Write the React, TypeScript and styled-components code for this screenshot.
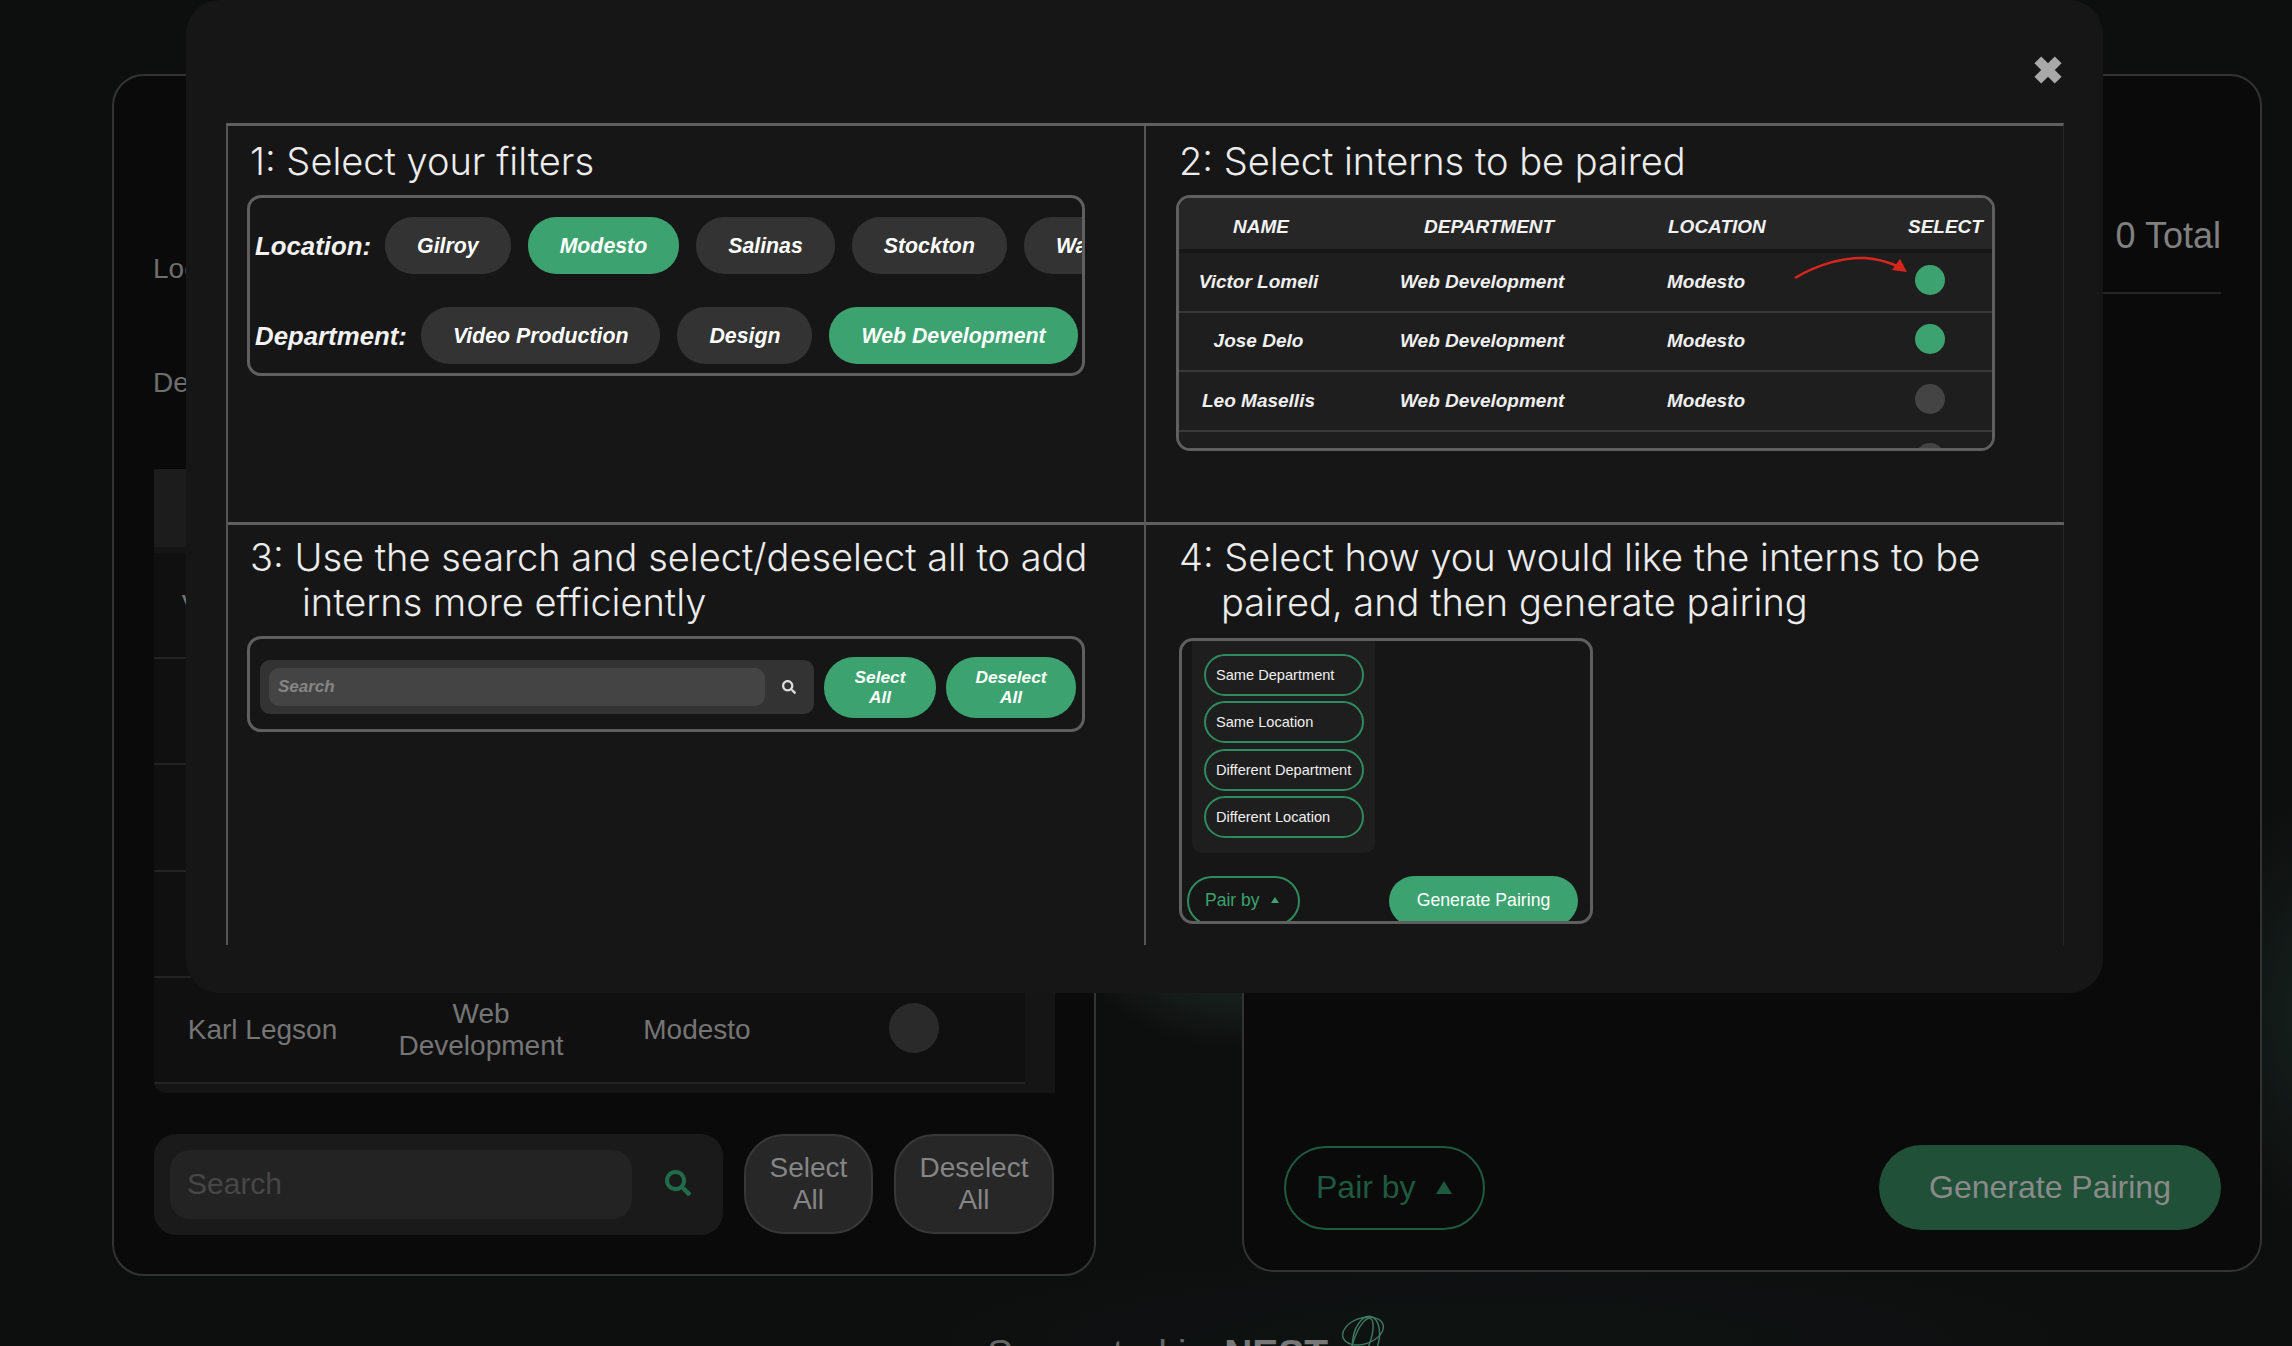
import * as React from 'react';
import styled, { createGlobalStyle } from 'styled-components';
import { FaSearch } from 'react-icons/fa';

const GREEN = '#3ca370';

const GlobalStyle = createGlobalStyle`
  html, body {
    margin: 0;
    padding: 0;
    background: #0c0d0d;
  }
  * {
    box-sizing: border-box;
  }
`;

const Page = styled.div`
  position: relative;
  width: 2292px;
  height: 1346px;
  overflow: hidden;
  padding: 74px 30px 0 112px;
  font-family: 'Liberation Sans', Arial, sans-serif;
  background:
    radial-gradient(ellipse 190px 150px at 1240px 900px, #1f2f2a 0%, #1a2622 50%, transparent 100%),
    radial-gradient(ellipse 120px 220px at 2320px 1010px, #16211e 0%, transparent 100%),
    radial-gradient(ellipse 800px 120px at 1500px 1340px, #0e1312 0%, transparent 100%),
    #0d0e0e;
`;

const Columns = styled.div`
  display: flex;
  align-items: flex-start;
  gap: 146px;
`;

const Card = styled.section<{ $width: number; $height: number }>`
  display: flex;
  flex-direction: column;
  width: ${props => props.$width}px;
  height: ${props => props.$height}px;
  border: 2px solid #333;
  border-radius: 32px;
  background: #0a0a0a;
`;

const LeftBody = styled.div`
  padding: 136px 40px 0;
`;

const FilterLine = styled.div`
  display: flex;
  align-items: center;
  height: 114px;
  margin-left: -1px;
  font-size: 28px;
  color: #6e6e6e;
`;

const BackTable = styled.div`
  width: 901px;
  height: 624px;
  margin-top: 29px;
  overflow: hidden;
  border-radius: 0 0 0 12px;
  background: #151515;
`;

const BackHead = styled.div`
  height: 78px;
  background: #1c1c1c;
  margin-bottom: 6px;
`;

const BackRow = styled.div`
  display: grid;
  grid-template-columns: 217px 220px 212px 222px;
  align-items: center;
  justify-items: center;
  width: 871px;
  height: 106.2px;
  border-bottom: 2px solid #232323;
  background: #101010;
  font-size: 28px;
  line-height: 32px;
  color: #757575;
  text-align: center;
`;

const BackDot = styled.span`
  width: 50px;
  height: 50px;
  margin-top: -4px;
  border-radius: 50%;
  background: #2a2a2a;
`;

const BackSearchRow = styled.div`
  display: flex;
  gap: 21px;
  margin-top: 41px;
`;

const BackSearch = styled.div`
  display: flex;
  align-items: center;
  width: 569px;
  height: 101px;
  padding: 0 16px;
  border-radius: 22px;
  background: #1a1a1a;
  color: #1f6b4a;
  font-size: 26px;

  svg {
    margin: -4px 0 0 -1px;
  }
`;

const BackInput = styled.input`
  width: 462px;
  height: 69px;
  margin-right: 34px;
  padding: 0 17px 2px;
  border: 0;
  outline: 0;
  border-radius: 20px;
  background: #232323;
  font-family: inherit;
  font-size: 30px;

  &::placeholder {
    color: #474747;
  }
`;

const BackButton = styled.button<{ $width: number }>`
  width: ${props => props.$width}px;
  height: 100px;
  padding: 0;
  border: 2px solid #383838;
  border-radius: 40px;
  background: #272727;
  font-family: inherit;
  font-size: 28px;
  line-height: 32px;
  color: #858585;
`;

const TotalBar = styled.div`
  display: flex;
  align-items: center;
  justify-content: flex-end;
  height: 218px;
  margin: 0 39px 0 40px;
  padding-top: 104px;
  border-bottom: 2px solid #262626;
  font-size: 36px;
  color: #808080;
`;

const PairBar = styled.div`
  display: flex;
  align-items: center;
  justify-content: space-between;
  margin-top: auto;
  padding: 0 39px 40px 40px;
`;

const BackPairBy = styled.div`
  display: flex;
  align-items: center;
  gap: 20px;
  width: 201px;
  height: 84px;
  padding-left: 30px;
  border: 2px solid #1f5a40;
  border-radius: 42px;
  font-size: 32px;
  color: #1f5a40;
`;

const Triangle = styled.span<{ $size: number; $color: string }>`
  width: 0;
  height: 0;
  border-left: ${props => props.$size}px solid transparent;
  border-right: ${props => props.$size}px solid transparent;
  border-bottom: ${props => props.$size * 1.7}px solid ${props => props.$color};
`;

const BackGenerate = styled.div`
  display: flex;
  align-items: center;
  justify-content: center;
  width: 342px;
  height: 85px;
  border-radius: 43px;
  background: #205138;
  font-size: 32px;
  color: #8a8a8a;
`;

const Footer = styled.footer`
  display: flex;
  align-items: flex-start;
  gap: 10px;
  padding: 56px 0 0 875px;
  font-size: 39px;
  color: #666;
`;

const FooterBrand = styled.b`
  margin-left: 6px;
  color: #777;
`;

const FooterLogo = styled.svg`
  width: 46px;
  height: 46px;
  margin: -17px 0 0 3px;
`;

const Modal = styled.div`
  position: absolute;
  top: 0;
  left: 186px;
  width: 1917px;
  height: 993px;
  padding: 0 39px 0 40px;
  border-radius: 34px;
  background: #161616;
`;

const ModalTop = styled.div`
  display: flex;
  justify-content: flex-end;
  height: 123px;
  padding: 55px 1px 0 0;
`;

const CloseIcon = styled.svg`
  width: 30px;
  height: 30px;
`;

const Steps = styled.div`
  display: grid;
  grid-template-columns: 916px 920px;
  grid-template-rows: 396px 423px;
  border-top: 3px solid #5f5f5f;
  border-left: 2px solid #555;
  border-right: 1px solid #262626;
`;

const Step = styled.div<{ $bottom?: boolean; $right?: boolean }>`
  padding: ${props => (props.$bottom ? '10px' : '13px')} 0 0 ${props => (props.$right ? '30px' : '19px')};
  border-top: ${props => (props.$bottom ? '3px solid #5f5f5f' : '0')};
  border-left: ${props => (props.$right ? '2px solid #555' : '0')};
`;

const StepTitle = styled.h2<{ $indent: number }>`
  margin: 0 0 11px 3px;
  padding-left: ${props => props.$indent}px;
  text-indent: -${props => props.$indent}px;
  font-family: Inter, 'Liberation Sans', sans-serif;
  font-size: 38px;
  font-weight: 300;
  line-height: 45px;
  color: #ececec;
`;

const Frame = styled.div<{ $width: number; $height: number }>`
  position: relative;
  width: ${props => props.$width}px;
  height: ${props => props.$height}px;
  overflow: hidden;
  border: 3px solid #5f5f5f;
  border-radius: 14px;
`;

const PairFrame = styled(Frame)`
  margin: 13px 0 0 3px;
`;

const ChipRow = styled.div`
  display: flex;
  align-items: center;
  gap: 17px;
  height: 57px;
  margin: 19px 0 33px;
  padding-left: 5px;
  white-space: nowrap;
`;

const RowLabel = styled.span`
  margin-right: -3px;
  padding-top: 1px;
  font-size: 25.8px;
  font-weight: 700;
  font-style: italic;
  color: #f2f2f2;
`;

const Chip = styled.span<{ $on?: boolean }>`
  display: flex;
  align-items: center;
  flex-shrink: 0;
  height: 57px;
  padding: 1px 32px 0;
  border-radius: 28px;
  background: ${props => (props.$on ? GREEN : '#333')};
  font-size: 21.3px;
  font-weight: 700;
  font-style: italic;
  color: #fff;
`;

const InternGridHead = styled.div`
  display: grid;
  grid-template-columns: 191px 244px 240px 1fr;
  align-items: center;
  height: 51px;
  margin-bottom: 4px;
  padding: 7px 0 0 54px;
  background: #262626;
  box-shadow: 0 4px 0 #171717;
  font-size: 19px;
  font-weight: 700;
  font-style: italic;
  color: #f2f2f2;
`;

const InternRow = styled.div`
  display: grid;
  grid-template-columns: 159px 329px 248px 30px;
  align-items: center;
  height: 59.5px;
  border-bottom: 2px solid #383838;
  background: #1e1e1e;
  font-size: 19px;
  font-weight: 700;
  font-style: italic;
  color: #efefef;
`;

const NameCell = styled.span`
  text-align: center;
`;

const DepartmentCell = styled.span`
  padding-left: 62px;
`;

const SelectDot = styled.span<{ $on?: boolean }>`
  width: 30px;
  height: 30px;
  margin-top: -4px;
  border-radius: 50%;
  background: ${props => (props.$on ? GREEN : '#444')};
`;

const Arrow = styled.svg`
  position: absolute;
  top: 56px;
  left: 611px;
  width: 120px;
  height: 30px;
`;

const SearchRow = styled.div`
  display: flex;
  align-items: center;
  gap: 10px;
  height: 100%;
  padding: 6px 0 0 10px;
`;

const SearchBox = styled.div`
  display: flex;
  align-items: center;
  width: 554px;
  height: 54px;
  padding: 0 9px;
  border-radius: 10px;
  background: #333;
  color: #ddd;
  font-size: 14px;
`;

const SearchInput = styled.input`
  width: 496px;
  height: 38px;
  margin-right: 17px;
  padding: 0 9px;
  border: 0;
  outline: 0;
  border-radius: 10px;
  background: #444;
  font-family: inherit;
  font-size: 17px;
  font-weight: 700;
  font-style: italic;

  &::placeholder {
    color: #858585;
  }
`;

const AllButton = styled.button<{ $width: number }>`
  width: ${props => props.$width}px;
  height: 61px;
  padding: 0;
  border: 0;
  border-radius: 30px;
  background: ${GREEN};
  font-family: inherit;
  font-size: 17.3px;
  font-weight: 700;
  font-style: italic;
  line-height: 20px;
  color: #fff;
`;

const PairMenu = styled.div`
  display: flex;
  flex-direction: column;
  gap: 5.3px;
  width: 183px;
  height: 212px;
  margin-left: 10px;
  padding: 13px 11px 0 12px;
  border-radius: 0 0 10px 10px;
  background: #1e1e1e;
`;

const PairOption = styled.div`
  display: flex;
  align-items: center;
  flex-shrink: 0;
  width: 160px;
  height: 42px;
  padding-left: 10px;
  border: 2px solid #2f8a5f;
  border-radius: 21px;
  font-size: 14.6px;
  white-space: nowrap;
  color: #f0f0f0;
`;

const PairFoot = styled.div`
  display: flex;
  justify-content: space-between;
  margin-top: 23px;
  padding: 0 12px 0 5px;
`;

const SmallPairBy = styled.div`
  display: flex;
  align-items: center;
  gap: 12px;
  width: 113px;
  height: 50px;
  padding: 0 0 2px 16px;
  border: 2px solid #2f8a5f;
  border-radius: 25px;
  font-size: 17.5px;
  color: ${GREEN};
`;

const SmallGenerate = styled.div`
  display: flex;
  align-items: center;
  justify-content: center;
  width: 189px;
  height: 50px;
  padding-bottom: 2px;
  border-radius: 25px;
  background: ${GREEN};
  font-size: 17.7px;
  color: #fff;
`;

const backRows = [
  ['Victor Lomeli', 'Web Development'],
  ['Jose Delo', 'Web Development'],
  ['Leo Masellis', 'Web Development'],
  ['Arjun Patel', 'Web Development'],
  ['Karl Legson', 'Web Development'],
];

const interns = [
  { name: 'Victor Lomeli', on: true },
  { name: 'Jose Delo', on: true },
  { name: 'Leo Masellis', on: false },
  { name: 'Karl Legson', on: false },
];

const pairOptions = ['Same Department', 'Same Location', 'Different Department', 'Different Location'];

const App = () => (
  <Page>
    <GlobalStyle />
    <Columns>
      <Card $width={984} $height={1202}>
        <LeftBody>
          <FilterLine>Location:</FilterLine>
          <FilterLine>Department:</FilterLine>
          <BackTable>
            <BackHead />
            {backRows.map(([name, department]) => (
              <BackRow key={name}>
                <span>{name}</span>
                <span>{department}</span>
                <span>Modesto</span>
                <BackDot />
              </BackRow>
            ))}
          </BackTable>
          <BackSearchRow>
            <BackSearch>
              <BackInput placeholder="Search" readOnly />
              <FaSearch />
            </BackSearch>
            <BackButton $width={129}>
              Select
              <br />
              All
            </BackButton>
            <BackButton $width={160}>
              Deselect
              <br />
              All
            </BackButton>
          </BackSearchRow>
        </LeftBody>
      </Card>
      <Card $width={1021} $height={1198}>
        <TotalBar>0 Total</TotalBar>
        <PairBar>
          <BackPairBy>
            Pair by
            <Triangle $size={8} $color="#1f5a40" />
          </BackPairBy>
          <BackGenerate>Generate Pairing</BackGenerate>
        </PairBar>
      </Card>
    </Columns>
    <Footer>
      <span>Supported in</span>
      <FooterBrand>NEST</FooterBrand>
      <FooterLogo viewBox="0 0 46 46" fill="none" stroke="#3f7a62" strokeWidth="1.4">
        <ellipse cx="22" cy="16" rx="21" ry="13" transform="rotate(-18 22 16)" />
        <ellipse cx="25" cy="24" rx="13" ry="23" transform="rotate(12 25 24)" />
        <ellipse cx="21" cy="26" rx="8" ry="24" transform="rotate(20 21 26)" />
      </FooterLogo>
    </Footer>
    <Modal>
      <ModalTop>
        <CloseIcon viewBox="0 0 28 28" fill="none" stroke="#a9a9a9" strokeWidth="9">
          <path d="M4.5 4.5L23.5 23.5M23.5 4.5L4.5 23.5" />
        </CloseIcon>
      </ModalTop>
      <Steps>
        <Step>
          <StepTitle $indent={52}>1: Select your filters</StepTitle>
          <Frame $width={838} $height={181}>
            <ChipRow>
              <RowLabel>Location:</RowLabel>
              <Chip>Gilroy</Chip>
              <Chip $on>Modesto</Chip>
              <Chip>Salinas</Chip>
              <Chip>Stockton</Chip>
              <Chip>Watsonville</Chip>
            </ChipRow>
            <ChipRow>
              <RowLabel>Department:</RowLabel>
              <Chip>Video Production</Chip>
              <Chip>Design</Chip>
              <Chip $on>Web Development</Chip>
            </ChipRow>
          </Frame>
        </Step>
        <Step $right>
          <StepTitle $indent={52}>2: Select interns to be paired</StepTitle>
          <Frame $width={819} $height={256}>
            <InternGridHead>
              <span>NAME</span>
              <span>DEPARTMENT</span>
              <span>LOCATION</span>
              <span>SELECT</span>
            </InternGridHead>
            {interns.map(intern => (
              <InternRow key={intern.name}>
                <NameCell>{intern.name}</NameCell>
                <DepartmentCell>Web Development</DepartmentCell>
                <span>Modesto</span>
                <SelectDot $on={intern.on} />
              </InternRow>
            ))}
            <Arrow viewBox="0 0 120 30" fill="none">
              <path d="M5 24C28 10 55 3 75 4C88 5 98 8 107 12" stroke="#d9261c" strokeWidth="2.5" />
              <path d="M117 18L102 16L110 5Z" fill="#d9261c" />
            </Arrow>
          </Frame>
        </Step>
        <Step $bottom>
          <StepTitle $indent={52}>3: Use the search and select/deselect all to add interns more efficiently</StepTitle>
          <Frame $width={838} $height={96}>
            <SearchRow>
              <SearchBox>
                <SearchInput placeholder="Search" readOnly />
                <FaSearch />
              </SearchBox>
              <AllButton $width={112}>
                Select
                <br />
                All
              </AllButton>
              <AllButton $width={130}>
                Deselect
                <br />
                All
              </AllButton>
            </SearchRow>
          </Frame>
        </Step>
        <Step $bottom $right>
          <StepTitle $indent={42}>4: Select how you would like the interns to be paired, and then generate pairing</StepTitle>
          <PairFrame $width={414} $height={286}>
            <PairMenu>
              {pairOptions.map(option => (
                <PairOption key={option}>{option}</PairOption>
              ))}
            </PairMenu>
            <PairFoot>
              <SmallPairBy>
                Pair by
                <Triangle $size={4} $color={GREEN} />
              </SmallPairBy>
              <SmallGenerate>Generate Pairing</SmallGenerate>
            </PairFoot>
          </PairFrame>
        </Step>
      </Steps>
    </Modal>
  </Page>
);

export default App;
